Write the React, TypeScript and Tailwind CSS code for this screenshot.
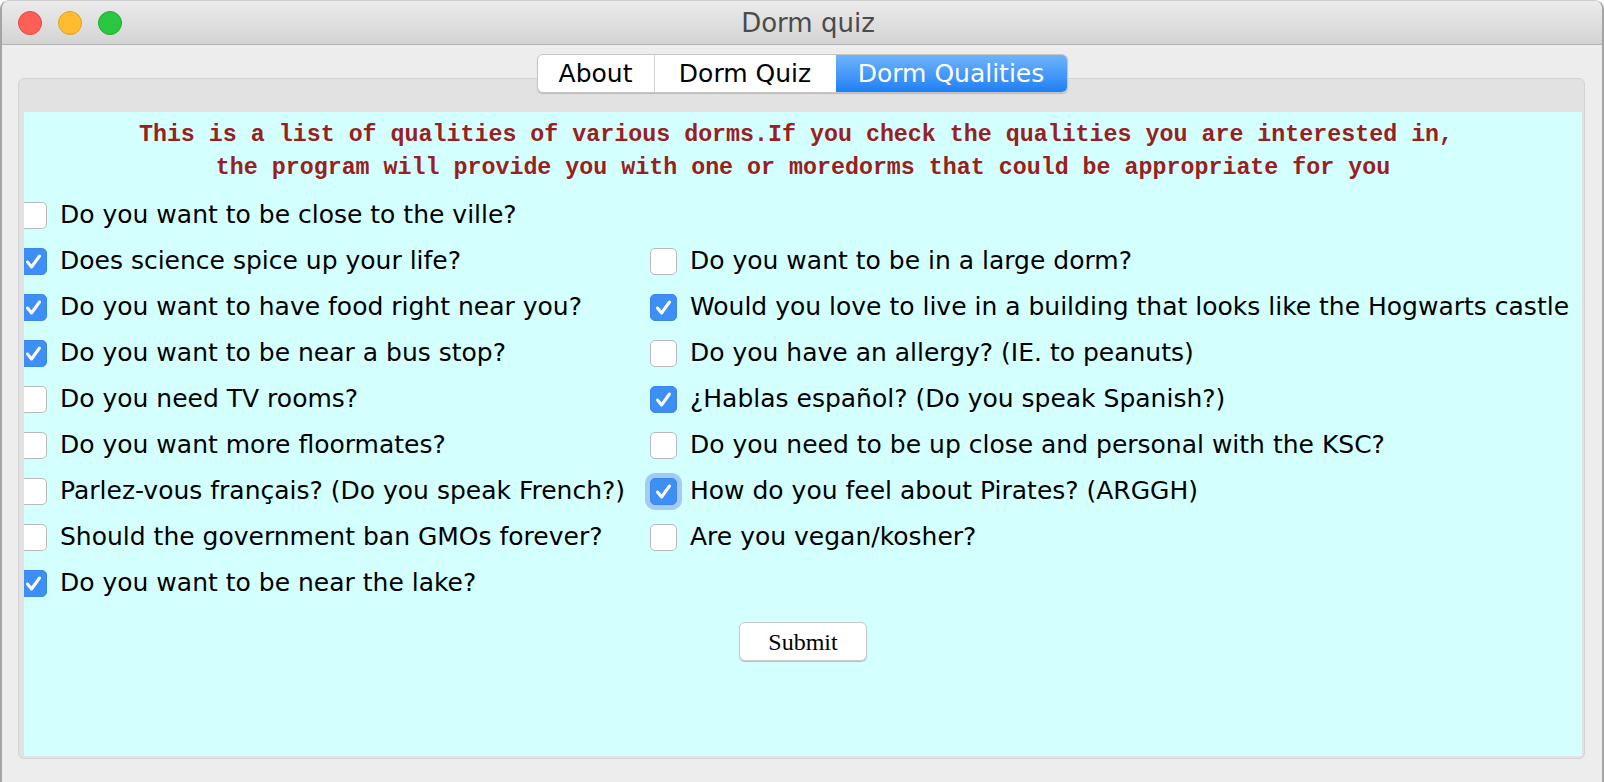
import React from "react";

type Item = { label: string; checked: boolean; focus?: boolean } | null;

const left: Item[] = [
  { label: "Do you want to be close to the ville?", checked: false },
  { label: "Does science spice up your life?", checked: true },
  { label: "Do you want to have food right near you?", checked: true },
  { label: "Do you want to be near a bus stop?", checked: true },
  { label: "Do you need TV rooms?", checked: false },
  { label: "Do you want more floormates?", checked: false },
  { label: "Parlez-vous français? (Do you speak French?)", checked: false },
  { label: "Should the government ban GMOs forever?", checked: false },
  { label: "Do you want to be near the lake?", checked: true },
];

const right: Item[] = [
  null,
  { label: "Do you want to be in a large dorm?", checked: false },
  { label: "Would you love to live in a building that looks like the Hogwarts castle", checked: true },
  { label: "Do you have an allergy? (IE. to peanuts)", checked: false },
  { label: "¿Hablas español? (Do you speak Spanish?)", checked: true },
  { label: "Do you need to be up close and personal with the KSC?", checked: false },
  { label: "How do you feel about Pirates? (ARGGH)", checked: true, focus: true },
  { label: "Are you vegan/kosher?", checked: false },
  null,
];

function Box({ checked, focus }: { checked: boolean; focus?: boolean }) {
  if (checked) {
    return (
      <div
        className={
          "w-[27px] h-[27px] shrink-0 rounded-[5px] bg-[#3d8ff6] border border-[#3a86ea] flex items-center justify-center " +
          (focus ? "ring-[5px] ring-[#a3cbf6]" : "")
        }
      >
        <svg width="27" height="27" viewBox="0 0 27 27" className="-m-px">
          <path d="M7.5 14 L11.5 19 L19.5 8" fill="none" stroke="white" strokeWidth="3" strokeLinecap="round" strokeLinejoin="round" />
        </svg>
      </div>
    );
  }
  return <div className="w-[27px] h-[27px] shrink-0 rounded-[5px] bg-white border border-[#b9b9b9]" />;
}

function Row({ item }: { item: Item }) {
  if (!item) return <div className="h-[46px]" />;
  return (
    <div className="h-[46px] flex items-center gap-[13px] whitespace-nowrap">
      <Box checked={item.checked} focus={item.focus} />
      <span className="text-[25px] text-black" style={{ fontFamily: '"DejaVu Sans", sans-serif' }}>
        {item.label}
      </span>
    </div>
  );
}

export default function App() {
  const ui = { fontFamily: '"DejaVu Sans", sans-serif' };
  return (
    <div className="w-[1604px] h-[782px] bg-white overflow-hidden" style={ui}>
      <div className="w-full h-full flex flex-col rounded-t-[9px] border-x-2 border-t border-x-[#a4a4a4] border-t-[#cdcdcd] bg-[#ededed] overflow-hidden">
        {/* Title bar */}
        <div className="h-[44px] shrink-0 relative flex items-center justify-center bg-gradient-to-b from-[#ebebeb] to-[#d4d4d4] border-b border-[#b3b3b3]">
          <div className="absolute left-[16px] top-[10px] flex gap-[16px]">
            <div className="w-[24px] h-[24px] rounded-full bg-[#fe5f57] border border-[#e1453f]" />
            <div className="w-[24px] h-[24px] rounded-full bg-[#febc2e] border border-[#dfa023]" />
            <div className="w-[24px] h-[24px] rounded-full bg-[#29c840] border border-[#1dac2b]" />
          </div>
          <span className="ml-[12px] text-[26px] text-[#4b4b4b] leading-none">Dorm quiz</span>
        </div>

        {/* Body */}
        <div className="flex flex-col">
          <div className="relative z-10 mt-[9px] flex justify-center">
            <div className="flex h-[39px] rounded-[6px] border border-[#c6c6c6] bg-white shadow-[0_1px_1px_rgba(0,0,0,0.18)] overflow-hidden text-[25px]">
              <div className="w-[117px] flex items-center justify-center text-black border-r border-[#d4d4d4]">About</div>
              <div className="w-[181px] flex items-center justify-center text-black">Dorm Quiz</div>
              <div className="w-[231px] flex items-center justify-center text-white bg-gradient-to-b from-[#6db4fb] to-[#1b7ff5]">
                Dorm Qualities
              </div>
            </div>
          </div>

          <div className="-mt-[15px] ml-[16px] w-[1567px] h-[681px] rounded-[6px] border border-[#d3d3d3] bg-[#e2e2e2] pl-[5px] pr-[2px] pt-[33px] pb-[2px] flex flex-col">
            <div className="flex-1 bg-[#d4ffff] overflow-hidden flex flex-col">
              <div
                className="pt-[7px] text-center whitespace-pre font-bold text-[23.3px] leading-[33px] text-[#982020]"
                style={{ fontFamily: '"Liberation Mono", monospace' }}
              >
                <div>{"This is a list of qualities of various dorms.If you check the qualities you are interested in, "}</div>
                <div>{"the program will provide you with one or moredorms that could be appropriate for you"}</div>
              </div>

              <div className="mt-[7px] -ml-[4px] grid grid-cols-[630px_1fr]">
                <div className="flex flex-col">
                  {left.map((it, i) => (
                    <Row key={i} item={it} />
                  ))}
                </div>
                <div className="flex flex-col">
                  {right.map((it, i) => (
                    <Row key={i} item={it} />
                  ))}
                </div>
              </div>

              <div className="mt-[16px] flex justify-center">
                <button
                  className="w-[128px] h-[39px] rounded-[6px] bg-white border border-[#c8c8c8] shadow-[0_1px_1px_rgba(0,0,0,0.22)] text-[24px] text-black flex items-center justify-center"
                  style={{ fontFamily: '"Liberation Serif", serif' }}
                >
                  Submit
                </button>
              </div>
            </div>
          </div>
        </div>
      </div>
    </div>
  );
}
